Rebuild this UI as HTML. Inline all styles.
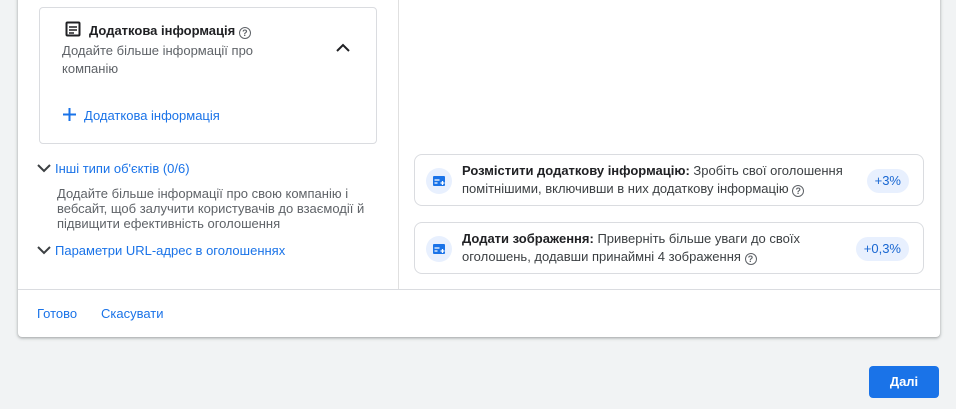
<!DOCTYPE html>
<html><head><meta charset="utf-8"><style>
*{box-sizing:border-box;margin:0;padding:0}
body{width:956px;height:409px;background:#f1f3f4;font-family:"Liberation Sans",Arial,sans-serif;position:relative;overflow:hidden;color:#3c4043}
.card{position:absolute;left:18px;top:-10px;width:922px;height:347px;background:#fff;box-shadow:0 1px 2px rgba(60,64,67,.3),0 1px 3px 1px rgba(60,64,67,.15);border-radius:0 0 4px 4px}
.vdiv{position:absolute;left:380px;top:0;width:1px;height:299px;background:#e0e0e0}
.hdiv{position:absolute;left:0;top:299px;width:922px;height:1px;background:#dadce0}
.box{position:absolute;left:21px;top:17px;width:338px;height:137px;border:1px solid #dadce0;border-radius:4px}
.abs{position:absolute}
.blue{color:#1a73e8}
.rec{position:absolute;left:396px;width:510px;height:52px;border:1px solid #dadce0;border-radius:8px}
.ic{position:absolute;left:11px;top:13px;width:26px;height:26px;border-radius:50%;background:#e8f0fe}
.rt{position:absolute;left:47px;top:7px;font-size:13px;line-height:18px;color:#3c4043;width:400px}
.pill{position:absolute;right:14px;top:14px;height:24px;border-radius:12px;background:#e8f0fe;color:#1967d2;font-size:13px;line-height:24px;padding:0 8px}
.q{display:inline-block;width:12px;height:12px;border:1.3px solid #5f6368;border-radius:50%;font-size:9px;line-height:10px;text-align:center;color:#5f6368;font-weight:bold;vertical-align:-1px}
</style></head><body>
<div class="card">
 <div class="vdiv"></div><div class="hdiv"></div>
 <div class="box">
  <svg class="abs" style="left:24px;top:12px" width="18" height="18" viewBox="0 0 18 18"><rect x="1.5" y="1.5" width="15" height="15" rx="2" fill="#202124"/><rect x="3.5" y="3.5" width="11" height="11" fill="#fff"/><path d="M5 7h8M5 10h8M5 13h5" stroke="#202124" stroke-width="1.6"/></svg>
  <div class="abs" style="left:49px;top:15px;font-size:13px;font-weight:bold;color:#202124">Додаткова інформація <span class="q" style="font-weight:bold">?</span></div>
  <div class="abs" style="left:22px;top:34px;font-size:13px;line-height:18px;color:#5f6368;width:220px">Додайте більше інформації про компанію</div>
  <svg class="abs" style="left:295px;top:35px" width="16" height="10" viewBox="0 0 16 10"><path d="M2 8l6-6 6 6" fill="none" stroke="#202124" stroke-width="2"/></svg>
  <svg class="abs" style="left:22px;top:99px" width="15" height="15" viewBox="0 0 15 15"><path d="M7.5 1v13M1 7.5h13" stroke="#1a73e8" stroke-width="2"/></svg>
  <div class="abs blue" style="left:44px;top:100px;font-size:13px">Додаткова інформація</div>
 </div>
 <svg class="abs" style="left:19px;top:173px" width="14" height="10" viewBox="0 0 14 10"><path d="M1 2l6 6 6-6" fill="none" stroke="#3c4043" stroke-width="2"/></svg>
 <div class="abs blue" style="left:37px;top:171px;font-size:13px">Інші типи об'єктів (0/6)</div>
 <div class="abs" style="left:39px;top:196px;font-size:13px;line-height:15px;color:#5f6368;width:330px">Додайте більше інформації про свою компанію і вебсайт, щоб залучити користувачів до взаємодії й підвищити ефективність оголошення</div>
 <svg class="abs" style="left:19px;top:255px" width="14" height="10" viewBox="0 0 14 10"><path d="M1 2l6 6 6-6" fill="none" stroke="#3c4043" stroke-width="2"/></svg>
 <div class="abs blue" style="left:37px;top:253px;font-size:13px">Параметри URL-адрес в оголошеннях</div>
 <div class="rec" style="top:164px"><div class="ic"><svg width="26" height="26" viewBox="0 0 26 26"><rect x="7" y="8" width="12" height="10" rx="1" fill="#1a73e8"/><path d="M8.5 12h5M8.5 15h3" stroke="#fff" stroke-width="1.3"/><path d="M14.5 15h4M16.5 13v4" stroke="#fff" stroke-width="1.3"/></svg></div>
  <div class="rt"><b style="color:#202124">Розмістити додаткову інформацію:</b> Зробіть свої оголошення помітнішими, включивши в них додаткову інформацію <span class="q">?</span></div>
  <div class="pill">+3%</div></div>
 <div class="rec" style="top:232px"><div class="ic"><svg width="26" height="26" viewBox="0 0 26 26"><rect x="7" y="8" width="12" height="10" rx="1" fill="#1a73e8"/><path d="M8.5 12h5M8.5 15h3" stroke="#fff" stroke-width="1.3"/><path d="M14.5 15h4M16.5 13v4" stroke="#fff" stroke-width="1.3"/></svg></div>
  <div class="rt" style="width:370px"><b style="color:#202124">Додати зображення:</b> Приверніть більше уваги до своїх оголошень, додавши принаймні 4 зображення <span class="q">?</span></div>
  <div class="pill">+0,3%</div></div>
 <div class="abs blue" style="left:19px;top:316px;font-size:13px">Готово</div>
 <div class="abs blue" style="left:83px;top:316px;font-size:13px">Скасувати</div>
</div>
<div class="abs" style="left:869px;top:366px;width:70px;height:32px;background:#1a73e8;border-radius:4px;color:#fff;font-size:13px;font-weight:bold;text-align:center;line-height:32px">Далі</div>
</body></html>
